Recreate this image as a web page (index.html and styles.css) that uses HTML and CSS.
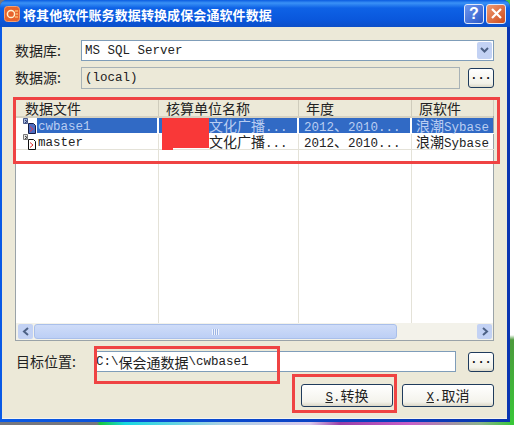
FILE: index.html
```html
<!DOCTYPE html>
<html lang="zh-CN">
<head>
    <meta charset="UTF-8">
    <meta name="viewport" content="width=device-width, initial-scale=1.0">
    <title>将其他软件账务数据转换成保会通软件数据</title>
    <link rel="stylesheet" href="styles.css">
</head>
<body>
    <div class="window">
        <header class="titlebar">
            <svg class="app-icon" width="16" height="16" viewBox="0 0 16 16">
                <rect x="0.5" y="0.5" width="15" height="15" rx="3" fill="#e8642c" stroke="#f4a070"/>
                <circle cx="7" cy="8" r="3.6" fill="none" stroke="#fff3d0" stroke-width="1.5"/>
                <path d="M11 5h3M12 8h2M11 11h3" stroke="#ffe08a" stroke-width="1.2"/>
            </svg>
            <h1>将其他软件账务数据转换成保会通软件数据</h1>
            <button class="cap-btn cap-help" type="button">?</button>
            <button class="cap-btn cap-close" type="button">
                <svg width="13" height="13" viewBox="0 0 13 13"><path d="M2 2l9 9M11 2l-9 9" stroke="#fff" stroke-width="2.2"/></svg>
            </button>
        </header>

        <div class="body">
            <div class="field">
                <label>数据库:</label>
                <div class="combo">
                    <span class="mono">MS SQL Server</span>
                    <span class="combo-arrow">
                        <svg width="9" height="7" viewBox="0 0 9 7"><path d="M1 1l3.500 3.500L8 1" fill="none" stroke="#4d6185" stroke-width="2"/></svg>
                    </span>
                </div>
            </div>

            <div class="field field-source">
                <label>数据源:</label>
                <div class="textbox textbox-off mono">(local)</div>
                <button class="more" type="button">...</button>
            </div>

            <div class="list">
                <div class="list-head">
                    <div class="col col-file">数据文件</div>
                    <div class="col col-unit">核算单位名称</div>
                    <div class="col col-year">年度</div>
                    <div class="col col-soft">原软件</div>
                </div>
                <div class="row row-on">
                    <div class="col col-file">
                        <svg class="file-icon" width="15" height="16" viewBox="0 0 15 16">
                            <path d="M1.500 .5h4v5h-4z" fill="#a9bce4" stroke="#4a5a8c"/>
                            <path d="M3 2l2 1.500L3 5" fill="none" stroke="#22305c"/>
                            <path d="M6.500 5.500h5l2 2v8h-7z" fill="#4f6cc0" stroke="#141c44"/>
                            <path d="M8 8.500l3 2.500-3 2.500" fill="none" stroke="#e03a50"/>
                        </svg>
                        <span class="mono sel">cwbase1</span>
                    </div>
                    <div class="col col-unit"><span class="unit-gap"></span>文化广播<span class="mono">...</span></div>
                    <div class="col col-year mono">2012<span class="cjk">、</span>2010...</div>
                    <div class="col col-soft">浪潮<span class="mono">Sybase</span></div>
                </div>
                <div class="row">
                    <div class="col col-file">
                        <svg class="file-icon" width="15" height="16" viewBox="0 0 15 16">
                            <path d="M1.500 .5h4v5h-4z" fill="#e6e6e6" stroke="#777"/>
                            <path d="M3 2l2 1.500L3 5" fill="none" stroke="#333"/>
                            <path d="M6.500 5.500h5l2 2v8h-7z" fill="#fff" stroke="#111"/>
                            <path d="M8 8.500l3 2.500-3 2.500" fill="none" stroke="#e03030"/>
                        </svg>
                        <span class="mono sel">master</span>
                    </div>
                    <div class="col col-unit"><span class="unit-gap"></span>文化广播<span class="mono">...</span></div>
                    <div class="col col-year mono">2012<span class="cjk">、</span>2010...</div>
                    <div class="col col-soft">浪潮<span class="mono">Sybase</span></div>
                </div>
                <div class="rows-empty">
                    <div class="col col-file"></div>
                    <div class="col col-unit"></div>
                    <div class="col col-year"></div>
                    <div class="col col-soft"></div>
                </div>
                <div class="hscroll">
                    <span class="sb-btn">
                        <svg width="8" height="9" viewBox="0 0 8 9"><path d="M6 1L2 4.500 6 8" fill="none" stroke="#4d6185" stroke-width="2"/></svg>
                    </span>
                    <div class="sb-track">
                        <div class="sb-thumb"><span class="sb-grip"></span></div>
                    </div>
                    <span class="sb-btn">
                        <svg width="8" height="9" viewBox="0 0 8 9"><path d="M2 1l4 3.500L2 8" fill="none" stroke="#4d6185" stroke-width="2"/></svg>
                    </span>
                </div>
            </div>

            <div class="field field-target">
                <label>目标位置:</label>
                <div class="textbox mono">C:\<span class="cjk">保会通数据</span>\cwbase1</div>
                <button class="more" type="button">...</button>
            </div>

            <div class="actions">
                <button class="btn" type="button"><span class="mono"><u>S</u>.</span> 转换</button>
                <button class="btn" type="button"><span class="mono"><u>X</u>.</span> 取消</button>
            </div>

            <!-- red marks drawn over the screenshot -->
            <div class="mark mark-list"></div>
            <div class="mark mark-target"></div>
            <div class="mark mark-btn"></div>
            <div class="blot blot-1"></div>
            <div class="blot blot-2"></div>
        </div>
    </div>
</body>
</html>
```

FILE: styles.css
```css
/* General Styling */
html, body {
    margin: 0;
    padding: 0;
}

body {
    width: 514px;
    height: 425px;
    overflow: hidden;
    background:
        linear-gradient(180deg, #fff 0, #fff 335px, #4c9a3c 340px, #38c838 100%) right top / 4px 100% no-repeat,
        linear-gradient(90deg, #77777d 0, #77777d 97px, #18c83c 100px, #18d8e0 125px, #a8d0e4 220px, #d8c8ec 310px, #9a3fa8 340px, #c860c8 410px, #8cb48c 480px, #38c838 514px);
    font-family: "Noto Sans CJK SC", "Liberation Sans", sans-serif;
    font-size: 14px;
    color: #222;
}

.window {
    width: 510px;
    height: 422px;
    display: flex;
    flex-direction: column;
    background: linear-gradient(90deg, #0a5ae6 0, #0a4ad0 40%, #0a35b0 100%);
    border-radius: 7px 7px 0 0;
    box-sizing: border-box;
    padding: 0 3px 3px 2px;
}

.titlebar {
    height: 27px;
    flex: none;
    display: flex;
    align-items: center;
    gap: 2px;
    margin: 0 -3px 0 -2px;
    padding: 0 4px 0 4px;
    background: linear-gradient(180deg, #0a5be0 0, #3a92f6 3px, #0e62e6 8px, #0a57dc 20px, #0d4fc8 27px);
    border-radius: 7px 7px 0 0;
}

.app-icon {
    flex: none;
    margin-right: 1px;
}

h1 {
    flex: 1;
    margin: 2px 0 0;
    font-size: 13px;
    font-weight: 700;
    letter-spacing: .1px;
    color: #fff;
    white-space: nowrap;
}

.cap-btn {
    width: 20px;
    height: 20px;
    padding: 0;
    display: flex;
    align-items: center;
    justify-content: center;
    border: 1px solid #dfe8fa;
    border-radius: 3px;
    color: #fff;
    font: 700 16px "Liberation Sans", sans-serif;
}

.cap-help {
    background: linear-gradient(135deg, #6f96ee, #2a58c8);
}

.cap-close {
    background: linear-gradient(135deg, #ee9a72, #cf4b1c);
}

.body {
    position: relative;
    flex: 1;
    background: #ece9d8;
    padding: 13px 13px 0 13px;
    display: flex;
    flex-direction: column;
    box-shadow: inset 0 -1px 0 #f6f5ee;
}

.mono {
    font-family: "Liberation Mono", monospace;
    font-size: 12.5px;
}

.cjk {
    font-family: "Noto Sans CJK SC", sans-serif;
    font-size: 14px;
}

.field {
    display: flex;
    align-items: center;
    height: 21px;
}

.field label {
    width: 66px;
    flex: none;
    padding-bottom: 2px;
}

.field-source {
    margin-top: 6px;
    height: 22px;
}

.combo {
    flex: 1;
    height: 21px;
    box-sizing: border-box;
    border: 1px solid #7f9db9;
    background: #fff;
    display: flex;
    align-items: center;
    justify-content: space-between;
    padding: 0 1px 0 3px;
}

.combo-arrow {
    width: 15px;
    height: 17px;
    display: flex;
    align-items: center;
    justify-content: center;
    background: #c3d2f4;
    border-radius: 2px;
}

.textbox {
    flex: 1;
    height: 100%;
    box-sizing: border-box;
    border: 1px solid #7f9db9;
    background: #fff;
    display: flex;
    align-items: center;
    padding: 0 3px;
    white-space: pre;
}

.textbox-off {
    background: #ece9d8;
    border-color: #a8b2b6;
}

.more {
    flex: none;
    width: 26px;
    height: 20px;
    margin-left: 8px;
    padding: 0 0 5px;
    border: 1px solid #1f3b5c;
    border-radius: 3px;
    background: linear-gradient(180deg, #fff, #f2f1e8 80%, #dcd8c8);
    font: 700 12px "Liberation Mono", monospace;
    color: #111;
}

.list {
    margin-top: 9px;
    height: 243px;
    box-sizing: border-box;
    border: 1px solid #9aa3a8;
    background: #fff;
    display: flex;
    flex-direction: column;
}

.list-head, .row, .rows-empty {
    display: flex;
}

.list-head {
    height: 19px;
    flex: none;
    background: #ece9d8;
    border-bottom: 2px solid #d6d2c2;
    box-sizing: border-box;
    align-items: stretch;
    line-height: 16px;
}

.list-head .col {
    padding: 1px 0 0 7px;
    box-sizing: border-box;
    box-shadow: inset -1px 0 0 #cfccbc;
}

.list-head .col-file {
    padding-left: 9px;
}

.col {
    flex: none;
    white-space: nowrap;
}

.col-file { width: 143px; }
.col-unit { width: 140px; }
.col-year { width: 113px; }
.col-soft { width: 82px; }

.row {
    height: 16px;
    flex: none;
    line-height: 15px;
}

.row .col {
    height: 16px;
    box-shadow: inset -1px 0 0 #e4e2d8, inset 0 -1px 0 #e4e2d8;
    box-sizing: border-box;
}

.row .col-file {
    display: flex;
}

.row .col-year {
    padding-left: 5px;
}

.row .col-soft {
    padding-left: 4px;
    box-shadow: inset 0 -1px 0 #e4e2d8;
}

.row-on {
    background: #316ac5;
    color: #b9cdf2;
}

.row-on .col {
    box-shadow: inset -2px 0 0 #fff, inset 0 -1px 0 #fff;
}

.row-on .col-soft {
    box-shadow: inset 0 -1px 0 #fff;
}

.row-on .col-file {
    background: linear-gradient(90deg, #fff 0, #fff 21px, #316ac5 21px);
}

.file-icon {
    flex: none;
    margin-left: 6px;
}

.sel {
    margin-left: 1px;
    padding-top: 2px;
    line-height: 14px;
}

.unit-gap {
    display: inline-block;
    width: 50px;
}

.rows-empty {
    flex: 1;
    min-height: 0;
}

.rows-empty .col {
    box-shadow: inset -1px 0 0 #e4e2d8;
}

.rows-empty .col-soft {
    box-shadow: none;
}

.hscroll {
    height: 17px;
    flex: none;
    display: flex;
    padding: 0 1px 0 2px;
    background: #f3f2ea;
}

.sb-btn {
    width: 15px;
    flex: none;
    display: flex;
    align-items: center;
    justify-content: center;
    background: #c3d2f4;
    border-radius: 2px;
    margin: 1px 0;
}

.sb-track {
    flex: 1;
    display: flex;
}

.sb-thumb {
    width: 363px;
    margin: 1px 0 1px 1px;
    display: flex;
    align-items: center;
    justify-content: center;
    background: linear-gradient(180deg, #cfdcf8, #bccff5);
    border: 1px solid #a9bfea;
    border-radius: 3px;
    box-sizing: border-box;
}

.sb-grip {
    width: 7px;
    height: 6px;
    background: repeating-linear-gradient(90deg, #eef3fd 0, #eef3fd 1px, #9db5e4 1px, #9db5e4 2px);
}

.field-target {
    margin-top: 10px;
    height: 21px;
}

.field-target label {
    width: 78px;
    padding-left: 1px;
}

.field-target .textbox {
    padding: 0 1px;
}

.field-target .more {
    margin-left: 12px;
}

.actions {
    margin-top: 12px;
    display: flex;
    justify-content: flex-end;
    gap: 9px;
}

.btn {
    width: 92px;
    height: 23px;
    padding: 0 0 3px;
    border: 1px solid #1f3b5c;
    border-radius: 3px;
    background: linear-gradient(180deg, #fff, #f4f3ec 80%, #dcd8c8);
    font: 14px "Noto Sans CJK SC", sans-serif;
    word-spacing: -3px;
    color: #222;
}

/* red annotation boxes */
.mark {
    position: absolute;
    border: 3px solid #ef4343;
    box-sizing: border-box;
}

.mark-list {
    left: 11px;
    top: 70px;
    width: 487px;
    height: 67px;
}

.mark-target {
    left: 92px;
    top: 319px;
    width: 186px;
    height: 38px;
}

.mark-btn {
    left: 290px;
    top: 347px;
    width: 105px;
    height: 39px;
}

.blot {
    position: absolute;
    background: #f93838;
}

.blot-1 {
    left: 160px;
    top: 91px;
    width: 47px;
    height: 30px;
}

.blot-2 {
    left: 160px;
    top: 121px;
    width: 11px;
    height: 2px;
}
```
